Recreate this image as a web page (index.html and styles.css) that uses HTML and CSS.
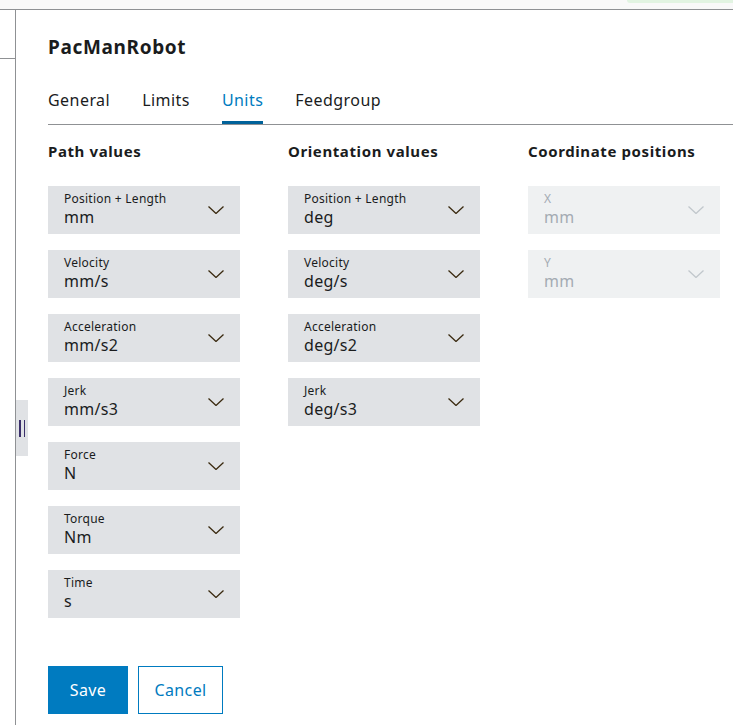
FILE: index.html
```html
<!DOCTYPE html>
<html>
<head>
<meta charset="utf-8">
<link rel="stylesheet" href="styles.css">
</head>
<body>
<div class="topbar"><div class="toast"></div></div>
<div class="main">
  <aside class="sidebar"><div class="sidebar-head"></div></aside>
  <div class="handle"><span></span><span></span></div>
  <section class="content">
    <h1 class="title">PacManRobot</h1>
    <nav class="tabs">
      <span class="tab">General</span>
      <span class="tab">Limits</span>
      <span class="tab active">Units</span>
      <span class="tab">Feedgroup</span>
    </nav>
    <div class="columns">
      <div class="col">
        <h2 class="heading">Path values</h2>
        <div class="select"><div class="txt"><div class="label">Position + Length</div><div class="value">mm</div></div><svg class="chev" viewBox="0 0 16 8"><path d="M0.5 0.5 L8 7.5 L15.5 0.5"/></svg></div>
        <div class="select"><div class="txt"><div class="label">Velocity</div><div class="value">mm/s</div></div><svg class="chev" viewBox="0 0 16 8"><path d="M0.5 0.5 L8 7.5 L15.5 0.5"/></svg></div>
        <div class="select"><div class="txt"><div class="label">Acceleration</div><div class="value">mm/s2</div></div><svg class="chev" viewBox="0 0 16 8"><path d="M0.5 0.5 L8 7.5 L15.5 0.5"/></svg></div>
        <div class="select"><div class="txt"><div class="label">Jerk</div><div class="value">mm/s3</div></div><svg class="chev" viewBox="0 0 16 8"><path d="M0.5 0.5 L8 7.5 L15.5 0.5"/></svg></div>
        <div class="select"><div class="txt"><div class="label">Force</div><div class="value">N</div></div><svg class="chev" viewBox="0 0 16 8"><path d="M0.5 0.5 L8 7.5 L15.5 0.5"/></svg></div>
        <div class="select"><div class="txt"><div class="label">Torque</div><div class="value">Nm</div></div><svg class="chev" viewBox="0 0 16 8"><path d="M0.5 0.5 L8 7.5 L15.5 0.5"/></svg></div>
        <div class="select"><div class="txt"><div class="label">Time</div><div class="value">s</div></div><svg class="chev" viewBox="0 0 16 8"><path d="M0.5 0.5 L8 7.5 L15.5 0.5"/></svg></div>
      </div>
      <div class="col">
        <h2 class="heading">Orientation values</h2>
        <div class="select"><div class="txt"><div class="label">Position + Length</div><div class="value">deg</div></div><svg class="chev" viewBox="0 0 16 8"><path d="M0.5 0.5 L8 7.5 L15.5 0.5"/></svg></div>
        <div class="select"><div class="txt"><div class="label">Velocity</div><div class="value">deg/s</div></div><svg class="chev" viewBox="0 0 16 8"><path d="M0.5 0.5 L8 7.5 L15.5 0.5"/></svg></div>
        <div class="select"><div class="txt"><div class="label">Acceleration</div><div class="value">deg/s2</div></div><svg class="chev" viewBox="0 0 16 8"><path d="M0.5 0.5 L8 7.5 L15.5 0.5"/></svg></div>
        <div class="select"><div class="txt"><div class="label">Jerk</div><div class="value">deg/s3</div></div><svg class="chev" viewBox="0 0 16 8"><path d="M0.5 0.5 L8 7.5 L15.5 0.5"/></svg></div>
      </div>
      <div class="col">
        <h2 class="heading">Coordinate positions</h2>
        <div class="select disabled"><div class="txt"><div class="label">X</div><div class="value">mm</div></div><svg class="chev" viewBox="0 0 16 8"><path d="M0.5 0.5 L8 7.5 L15.5 0.5"/></svg></div>
        <div class="select disabled"><div class="txt"><div class="label">Y</div><div class="value">mm</div></div><svg class="chev" viewBox="0 0 16 8"><path d="M0.5 0.5 L8 7.5 L15.5 0.5"/></svg></div>
      </div>
    </div>
    <div class="actions">
      <button class="btn primary">Save</button>
      <button class="btn secondary">Cancel</button>
    </div>
  </section>
</div>
</body>
</html>
```

FILE: styles.css
```css
* { box-sizing: border-box; }
html, body { margin: 0; padding: 0; background: #fff; }
body {
  font-family: "Noto Sans", "Open Sans", sans-serif;
  color: #1a1c1d;
  width: 733px;
  height: 725px;
  overflow: hidden;
}
.topbar {
  height: 10px;
  background: #f9f9f9;
  border-bottom: 1px solid #8f9194;
  position: relative;
}
.toast {
  position: absolute;
  top: 0;
  left: 627px;
  right: 0;
  height: 3px;
  background: #e2f4e2;
  border-bottom-left-radius: 3px;
}
.main {
  display: flex;
  position: relative;
  height: 715px;
}
.sidebar {
  width: 16px;
  flex: none;
  border-right: 1px solid #8f9194;
}
.sidebar-head {
  height: 49px;
  border-bottom: 1px solid #8f9194;
}
.handle {
  position: absolute;
  left: 16px;
  top: 390px;
  width: 12px;
  height: 56px;
  background: #e0e2e5;
  display: flex;
  justify-content: center;
  align-items: center;
  gap: 3px;
}
.handle span {
  width: 1.5px;
  height: 17px;
  background: #3a2f6a;
}
.content {
  flex: 1;
  padding: 25px 0 0 32px;
  min-width: 0;
}
.title {
  margin: 0;
  font-size: 19px;
  line-height: 24px;
  font-weight: 700;
  letter-spacing: 0.65px;
  color: #1a1c1d;
}
.tabs {
  margin-top: 17px;
  display: flex;
  gap: 32px;
  border-bottom: 1px solid #8f9194;
  height: 49px;
}
.tab {
  font-size: 16px;
  line-height: 48px;
  height: 48px;
  color: #1a1c1d;
  letter-spacing: 0.45px;
  position: relative;
}
.tab.active {
  color: #007bc0;
}
.tab.active::after {
  content: "";
  position: absolute;
  left: 0;
  right: 0;
  bottom: 0;
  height: 3px;
  background: #00629a;
}
.columns {
  display: grid;
  grid-template-columns: 192px 192px 192px;
  column-gap: 48px;
  margin-top: 14px;
}
.col {
  display: flex;
  flex-direction: column;
  gap: 16px;
}
.heading {
  margin: 0 0 7px;
  font-size: 15px;
  line-height: 24px;
  font-weight: 700;
  letter-spacing: 0.6px;
}
.select {
  height: 48px;
  background: #e0e2e5;
  display: flex;
  align-items: center;
  justify-content: space-between;
  padding: 0 16px;
}
.txt {
  display: flex;
  flex-direction: column;
  margin-top: -2px;
}
.label {
  font-size: 12px;
  line-height: 16px;
  letter-spacing: 0.25px;
  color: #1a1c1d;
}
.value {
  font-size: 16px;
  line-height: 20px;
  letter-spacing: 0.3px;
  color: #1a1c1d;
}
.chev {
  width: 16px;
  height: 8px;
  fill: none;
  stroke: #3a2a10;
  stroke-width: 1.3;
  margin-top: 0;
}
.select.disabled {
  background: #eff1f2;
}
.select.disabled .label,
.select.disabled .value {
  color: #a4abb3;
}
.select.disabled .chev {
  stroke: #c1c7cc;
}
.actions {
  display: flex;
  gap: 10px;
  margin-top: 48px;
}
.btn {
  height: 48px;
  font-family: inherit;
  font-size: 16px;
  letter-spacing: 0.4px;
  padding: 0;
  cursor: pointer;
}
.btn.primary {
  background: #007bc0;
  color: #fff;
  border: none;
  width: 80px;
}
.btn.secondary {
  background: #fff;
  color: #007bc0;
  border: 1px solid #007bc0;
  width: 85px;
}
```
